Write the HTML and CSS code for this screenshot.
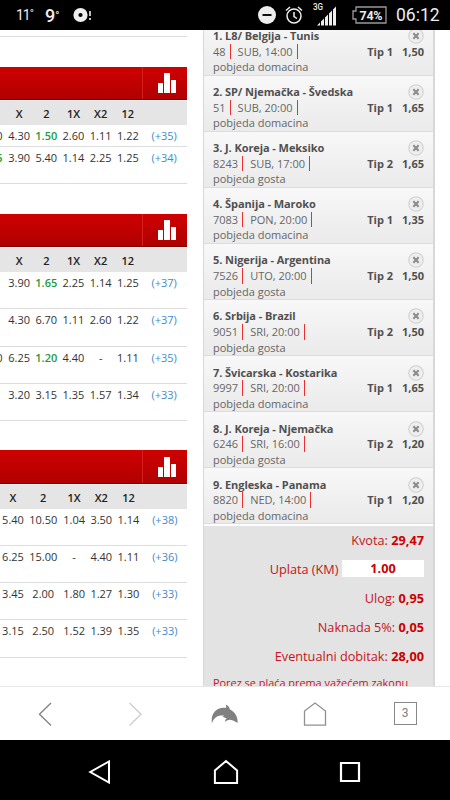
FILE: index.html
```html
<!DOCTYPE html>
<html lang="bs">
<head>
    <meta charset="UTF-8">
    <meta name="viewport" content="width=device-width, initial-scale=1.0">
    <title>Kladionica</title>
    <link rel="stylesheet" href="styles.css">
</head>
<body>
    <div class="status-bar">
        <span class="temp-small">11<sup>°</sup></span>
        <span class="temp-big">9<sup>°</sup></span>
        <svg class="disc" width="20" height="16" viewBox="0 0 20 16"><circle cx="7.5" cy="8" r="4.6" fill="none" stroke="#eee" stroke-width="5"/><path d="M17 4v5M17 11v2" stroke="#eee" stroke-width="1.6"/></svg>
        <svg class="dnd" width="18" height="18" viewBox="0 0 18 18"><circle cx="9" cy="9" r="9" fill="#eee"/><path d="M4.500 9h9" stroke="#111" stroke-width="2"/></svg>
        <svg class="alarm" width="18" height="18" viewBox="0 0 18 18" fill="none" stroke="#eee" stroke-width="1.500"><circle cx="9" cy="10" r="7"/><path d="M9 6v4.500l3 2M1 4.500l4-3.500M17 4.500l-4-3.500"/></svg>
        <svg class="signal" width="24" height="24" viewBox="0 0 24 24"><text x="0" y="8" font-family="Roboto" font-weight="500" font-size="8.500" textLength="10" lengthAdjust="spacingAndGlyphs" fill="#eee">3G</text><path d="M4 23.500l3-3v3zM8 23.500v-4l3-3v7zM12 23.500v-8l3-3v11zM16 23.500v-12l3-3v15zM20 23.500v-16l3-3v19z" fill="#eee"/></svg>
        <svg class="battery" width="35" height="18" viewBox="0 0 35 18"><path d="M4 1h30v16H4v-4H1V5h3z" fill="none" stroke="#999" stroke-width="1.300"/><text x="19" y="13.500" text-anchor="middle" font-family="Roboto" font-weight="700" font-size="12.500" textLength="23" fill="#eee">74%</text></svg>
        <span class="clock">06:12</span>
    </div>

    <div class="page">
        <div class="offer">
            <div class="offer-end"></div>
            <div class="league">
                <div class="league-head"><div class="stats"><i></i><i></i><i></i></div></div>
                <div class="row head"><span></span><span>X</span><span>2</span><span>1X</span><span>X2</span><span>12</span><span></span></div>
                <div class="row short"><span>0</span><span>4.30</span><span class="win">1.50</span><span>2.60</span><span>1.11</span><span>1.22</span><a>(+35)</a></div>
                <div class="row"><span class="win">5</span><span>3.90</span><span>5.40</span><span>1.14</span><span>2.25</span><span>1.25</span><a>(+34)</a></div>
            </div>
            <div class="league">
                <div class="league-head"><div class="stats"><i></i><i></i><i></i></div></div>
                <div class="row head"><span></span><span>X</span><span>2</span><span>1X</span><span>X2</span><span>12</span><span></span></div>
                <div class="row"><span></span><span>3.90</span><span class="win">1.65</span><span>2.25</span><span>1.14</span><span>1.25</span><a>(+37)</a></div>
                <div class="row"><span></span><span>4.30</span><span>6.70</span><span>1.11</span><span>2.60</span><span>1.22</span><a>(+37)</a></div>
                <div class="row"><span>0</span><span>6.25</span><span class="win">1.20</span><span>4.40</span><span>-</span><span>1.11</span><a>(+35)</a></div>
                <div class="row"><span></span><span>3.20</span><span>3.15</span><span>1.35</span><span>1.57</span><span>1.34</span><a>(+33)</a></div>
            </div>
            <div class="league wide">
                <div class="league-head"><div class="stats"><i></i><i></i><i></i></div></div>
                <div class="row head"><span>X</span><span>2</span><span>1X</span><span>X2</span><span>12</span><span></span></div>
                <div class="row"><span>5.40</span><span>10.50</span><span>1.04</span><span>3.50</span><span>1.14</span><a>(+38)</a></div>
                <div class="row"><span>6.25</span><span>15.00</span><span>-</span><span>4.40</span><span>1.11</span><a>(+36)</a></div>
                <div class="row"><span>3.45</span><span>2.00</span><span>1.80</span><span>1.27</span><span>1.30</span><a>(+33)</a></div>
                <div class="row"><span>3.15</span><span>2.50</span><span>1.52</span><span>1.39</span><span>1.35</span><a>(+33)</a></div>
            </div>
        </div>

        <div class="slip">
            <div id="bets"></div>
            <div class="totals">
                <div class="total">Kvota: <b>29,47</b></div>
                <div class="total">Uplata (KM) <b class="stake">1.00</b></div>
                <div class="total">Ulog: <b>0,95</b></div>
                <div class="total">Naknada 5%: <b>0,05</b></div>
                <div class="total">Eventualni dobitak: <b>28,00</b></div>
                <div class="note">Porez se plaća prema važećem zakonu</div>
            </div>
        </div>
    </div>

    <div class="toolbar">
        <div><svg width="24" height="24" viewBox="0 0 24 24" fill="none" stroke="#808080" stroke-width="1.300"><path d="M18 1L6.500 12.200 18 23.500"/></svg></div>
        <div><svg width="24" height="24" viewBox="0 0 24 24" fill="none" stroke="#ccc" stroke-width="1.300"><path d="M6.500 1L18 12.200 6.500 23.500"/></svg></div>
        <div><svg width="28" height="24" viewBox="0 0 28 24"><path d="M.9 21.500C-.3 12.500 4 6.800 11.500 5.800c1.500-.2 2.500-.1 3.500.2.300-1.300.2-2.300-.3-3.500 2 .8 3.700 2.500 4.300 5 5 2.500 7.800 7 7.700 13.500-2.500-1.500-4.500-2.500-7.500-3.200-2 .1-3.500.8-5.200 2.200.2-1.800.8-3 1.800-3.900-1.800-.2-3.200-.8-4.300-1.700l2-.7C8 12.500 2.500 15 .9 21.500z" fill="#808080"/></svg></div>
        <div><svg width="24" height="24" viewBox="0 0 24 24" fill="none" stroke="#909090" stroke-width="1.300"><path d="M1.500 23.200V9L12 1l10.500 8v14.200z"/></svg></div>
        <div><span class="tabs">3</span></div>
    </div>

    <div class="nav-bar">
        <svg width="24" height="24" viewBox="0 0 24 24" fill="none" stroke="#fff" stroke-width="2"><path d="M21 1.500v21L2.300 12z"/></svg>
        <svg width="26" height="26" viewBox="0 0 26 26" fill="none" stroke="#fff" stroke-width="2"><path d="M1.900 24V11.500L13 2l11.100 9.500V24z"/></svg>
        <svg width="22" height="22" viewBox="0 0 22 22" fill="none" stroke="#fff" stroke-width="2.200"><path d="M2 2h18v18H2z"/></svg>
    </div>

    <script src="script.js"></script>
</body>
</html>
```

FILE: styles.css
```css
body {
    font-family: "Open Sans", "Noto Sans", sans-serif;
    margin: 0;
    width: 450px;
    height: 800px;
    overflow: hidden;
    background-color: #fff;
}
.status-bar {
    display: flex;
    align-items: center;
    box-sizing: border-box;
    height: 30px;
    padding: 0 10px 0 16px;
    background-color: #000;
    color: #eee;
    font-family: Roboto, sans-serif;
}
.status-bar sup {
    font-size: 11px;
    vertical-align: 3px;
    line-height: 0;
}
.temp-small {
    width: 29px;
    font-size: 14px;
    letter-spacing: -1px;
}
.temp-big {
    width: 28px;
    font-size: 18px;
    font-weight: 500;
}
.dnd {
    margin-left: auto;
}
.alarm {
    margin-left: 9px;
}
.signal {
    margin: 0 15px 2px 10px;
}
.battery {
    margin-right: 9px;
}
.clock {
    width: 44px;
    font-size: 17.5px;
    white-space: nowrap;
}

.page {
    display: flex;
    justify-content: space-between;
    box-sizing: border-box;
    height: 656px;
    padding-right: 15px;
    overflow: hidden;
}
.offer {
    width: 187px;
}
.offer-end {
    height: 6px;
    border-bottom: 1px solid #ddd;
}
.league {
    margin-top: 29.6px;
}
.league-head {
    display: flex;
    justify-content: flex-end;
    box-sizing: border-box;
    height: 33.8px;
    background: linear-gradient(#d00000, #b00000);
    border-bottom: 1px solid #800000;
}
.stats {
    display: flex;
    align-items: flex-end;
    gap: 1px;
    box-sizing: border-box;
    width: 45px;
    padding: 0 0 6px 15px;
    border-left: 1px solid #d42020;
}
.stats i {
    width: 5px;
    height: 10px;
    background-color: #fff;
}
.stats i:nth-child(2) {
    width: 6px;
    height: 20px;
}
.stats i:nth-child(3) {
    height: 13.5px;
}
.row {
    display: grid;
    grid-template-columns: 5.5px repeat(5, 27.2px) 45.5px;
    justify-items: center;
    box-sizing: border-box;
    height: 37.1px;
    padding-top: 3px;
    border-bottom: 1px solid #ddd;
    color: #333;
    font-size: 11px;
    line-height: 16px;
}
.row > :first-child {
    justify-self: end;
    padding-right: 3px;
}
.wide .row {
    grid-template-columns: 26px 34.5px repeat(3, 27.2px) 45.5px;
}
.wide .row > :first-child {
    justify-self: center;
    padding: 0;
}
.row.short {
    height: 21.5px;
}
.row.head {
    height: 25px;
    padding-top: 5px;
    background-color: #e5e5e5;
    border-top: 1px solid #f4f4f4;
    border-bottom: 0;
    color: #222;
    font-weight: 600;
}
.row a {
    color: #428bca;
}
.win {
    color: #1a9c3c;
    font-weight: 600;
}

.slip {
    box-sizing: border-box;
    width: 232px;
    border: 1px solid #d8d8d8;
    border-width: 0 2px 0 1px;
    background-color: #e3e3e3;
}
#bets {
    margin-top: -10.6px;
    border-bottom: 2px solid #fff;
}
.bet {
    display: grid;
    grid-template-columns: 1fr auto 31px;
    grid-template-rows: 15.6px 15.6px 15.6px;
    box-sizing: border-box;
    height: 56.1px;
    padding: 8.6px 9px 0;
    background: linear-gradient(#f8f8f8, #eaeaea);
    border-bottom: 1px solid #ddd;
    color: #666;
    font-size: 11px;
    line-height: 15.6px;
    white-space: nowrap;
}
.bet b {
    color: #505050;
}
.bet .name {
    grid-column: 1 / 3;
    letter-spacing: -0.08px;
}
.bet .odd {
    text-align: right;
}
.bet .info span {
    display: inline-block;
    height: 15.6px;
    margin-right: 7px;
    padding-right: 4px;
    border-right: 1px solid #e83030;
}
.remove {
    justify-self: end;
    width: 16px;
    height: 16px;
}
.totals {
    margin-top: -1px;
    padding: 0 9px;
    color: #c4141b;
    font-size: 12.7px;
}
.total {
    display: flex;
    align-items: center;
    justify-content: flex-end;
    gap: 3.5px;
    height: 29px;
}
.total b {
    color: #c00;
}
.total .stake {
    width: 82px;
    height: 17px;
    line-height: 17px;
    background-color: #fff;
    text-align: center;
}
.note {
    padding-top: 5px;
    font-size: 10.9px;
    white-space: nowrap;
}

.toolbar {
    display: flex;
    box-sizing: border-box;
    height: 54px;
    border-top: 1px solid #e8e8e8;
    background-color: #fff;
}
.toolbar div {
    display: flex;
    flex: 1;
    align-items: center;
    justify-content: center;
}
.tabs {
    width: 21px;
    height: 21px;
    border: 1px solid #888;
    color: #808080;
    font-family: Roboto, sans-serif;
    font-size: 12px;
    line-height: 21px;
    text-align: center;
}
.nav-bar {
    display: flex;
    align-items: center;
    justify-content: space-between;
    box-sizing: border-box;
    height: 60px;
    padding: 4px 89px 0 88px;
    background-color: #000;
}
```

FILE: script.js
```js
const bets = [
    ['L8/ Belgija - Tunis', '48', 'SUB, 14:00', 'domacina', 'Tip 1', '1,50'],
    ['SP/ Njemačka - Švedska', '51', 'SUB, 20:00', 'domacina', 'Tip 1', '1,65'],
    ['J. Koreja - Meksiko', '8243', 'SUB, 17:00', 'gosta', 'Tip 2', '1,65'],
    ['Španija - Maroko', '7083', 'PON, 20:00', 'domacina', 'Tip 1', '1,35'],
    ['Nigerija - Argentina', '7526', 'UTO, 20:00', 'gosta', 'Tip 2', '1,50'],
    ['Srbija - Brazil', '9051', 'SRI, 20:00', 'gosta', 'Tip 2', '1,50'],
    ['Švicarska - Kostarika', '9997', 'SRI, 20:00', 'domacina', 'Tip 1', '1,65'],
    ['J. Koreja - Njemačka', '6246', 'SRI, 16:00', 'gosta', 'Tip 2', '1,20'],
    ['Engleska - Panama', '8820', 'NED, 14:00', 'domacina', 'Tip 1', '1,20']
];

document.getElementById('bets').innerHTML = bets.map((b, i) => `
    <div class="bet">
        <b class="name">${i + 1}. ${b[0]}</b>
        <svg class="remove" viewBox="0 0 15 15"><circle cx="7.5" cy="7.5" r="6.8" fill="#eee" stroke="#d0d0d0"/><path d="M5 5l5 5M10 5l-5 5" stroke="#8c8c8c" stroke-width="2"/></svg>
        <div class="info"><span>${b[1]}</span><span>${b[2]}</span></div>
        <b>${b[4]}</b>
        <b class="odd">${b[5]}</b>
        <div>pobjeda ${b[3]}</div>
    </div>
`).join('');
```
